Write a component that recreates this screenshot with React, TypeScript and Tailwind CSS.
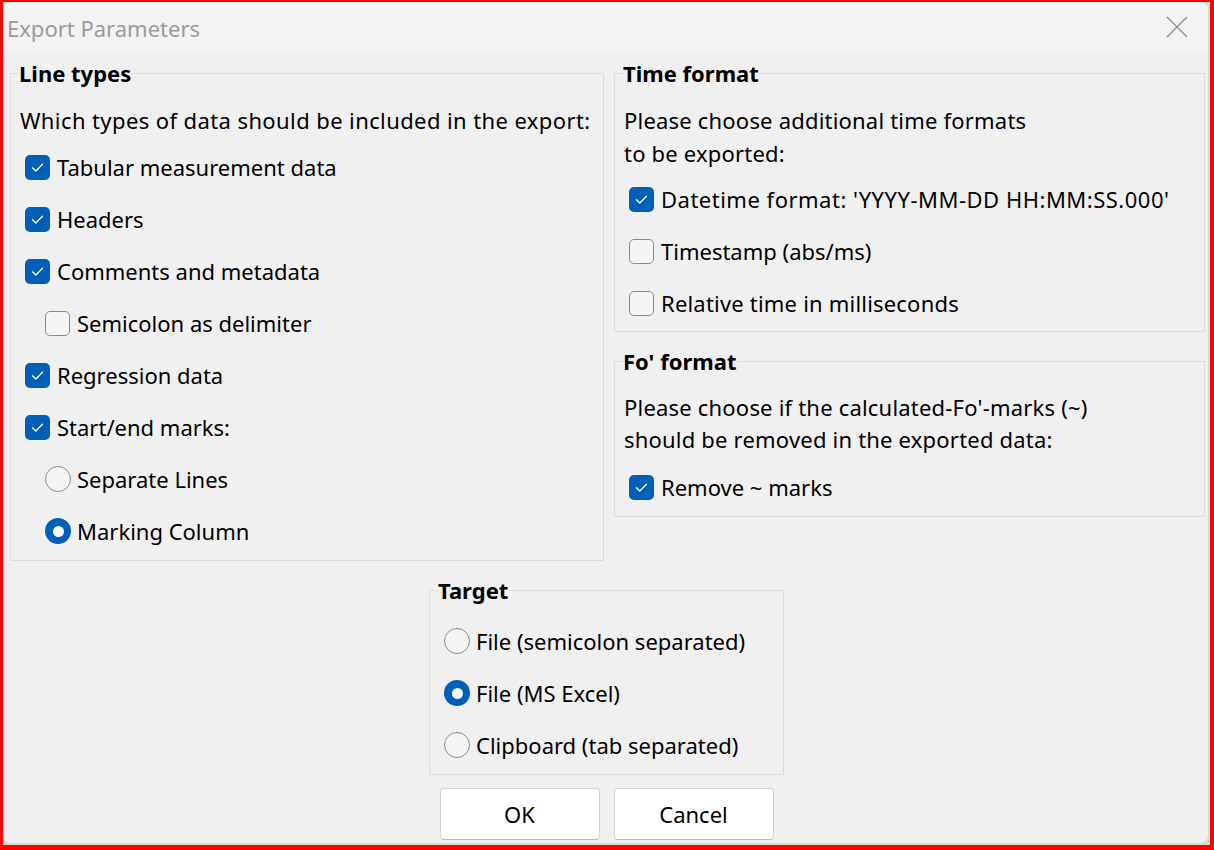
import type { ReactNode } from 'react';

const font = { fontFamily: '"Noto Sans", "Segoe UI", sans-serif' };

function CheckBox({ checked }: { checked: boolean }) {
  if (checked) {
    return (
      <span className="flex h-[25px] w-[25px] shrink-0 items-center justify-center rounded-[5px] bg-[#005fb8]">
        <svg width="15" height="15" viewBox="0 0 15 15" fill="none">
          <path d="M2.5 7.8 L5.8 11 L12.5 4.2" stroke="#ffffff" strokeWidth="1.3" strokeLinecap="round" strokeLinejoin="round" />
        </svg>
      </span>
    );
  }
  return <span className="h-[25px] w-[25px] shrink-0 rounded-[5px] border-[1.5px] border-[#8a8a8a] bg-[#f5f5f5]" />;
}

function Radio({ checked }: { checked: boolean }) {
  if (checked) {
    return (
      <span className="flex h-[26px] w-[26px] shrink-0 items-center justify-center rounded-full bg-[#005fb8]">
        <span className="h-[11px] w-[11px] rounded-full bg-white" />
      </span>
    );
  }
  return <span className="h-[26px] w-[26px] shrink-0 rounded-full border-[1.5px] border-[#8a8a8a] bg-[#f5f5f5]" />;
}

function Row({ children, indent = false, gap = 'gap-[7px]' }: { children: ReactNode; indent?: boolean; gap?: string }) {
  return <div className={`flex h-[52px] items-center ${gap} ${indent ? 'pl-[20px]' : ''}`}>{children}</div>;
}

function Group({ title, className, children }: { title: string; className: string; children: ReactNode }) {
  return (
    <fieldset className={`border border-[#dcdcdc] p-0 ${className}`}>
      <legend className="ml-[8px] px-0 text-[22px] font-bold leading-[24px] text-black">{title}</legend>
      {children}
    </fieldset>
  );
}

export default function App() {
  return (
    <div className="h-[850px] w-[1214px] border-b-[5px] border-l-[3px] border-r-[4px] border-t-[2px] border-[#ff0000] bg-[#d9d9cc]" style={font}>
      <div className="mb-[2px] mr-[2px] flex h-[841px] flex-col overflow-hidden rounded-[8px] bg-[#f0f0f0] text-[22px] text-black">
        <div className="flex h-[48px] shrink-0 items-center justify-between bg-[#f3f3f3] pl-[4px] pr-[20px]">
          <span className="pt-[4px] text-[#9b9b9b]">Export Parameters</span>
          <svg width="22" height="22" viewBox="0 0 22 22" className="mt-[2px]">
            <path d="M1 1 L21 21 M21 1 L1 21" stroke="#8c8c8c" strokeWidth="1.4" />
          </svg>
        </div>

        <div className="flex flex-col pl-[7px] pt-[11px]">
          <div className="flex items-start gap-[10px]">
            <Group title="Line types" className="w-[594px]">
              <div className="flex flex-col pb-[3px] pl-[9px]">
                <div className="mt-[19px] leading-[32px] tracking-[0.4px]">Which types of data should be included in the export:</div>
                <div className="mt-[5px] flex flex-col pl-[5px]">
                  <Row><CheckBox checked /><span>Tabular measurement data</span></Row>
                  <Row><CheckBox checked /><span>Headers</span></Row>
                  <Row><CheckBox checked /><span>Comments and metadata</span></Row>
                  <Row indent><CheckBox checked={false} /><span>Semicolon as delimiter</span></Row>
                  <Row><CheckBox checked /><span>Regression data</span></Row>
                  <Row><CheckBox checked /><span>Start/end marks:</span></Row>
                  <Row indent gap="gap-[6px]"><Radio checked={false} /><span>Separate Lines</span></Row>
                  <Row indent gap="gap-[6px]"><Radio checked /><span>Marking Column</span></Row>
                </div>
              </div>
            </Group>

            <div className="flex flex-col gap-[17px]">
              <Group title="Time format" className="w-[591px]">
                <div className="flex flex-col pb-[2px] pl-[9px]">
                  <div className="mt-[19px] leading-[33px] tracking-[0.2px]">
                    Please choose additional time formats
                    <br />
                    to be exported:
                  </div>
                  <div className="mt-[3px] flex flex-col pl-[5px]">
                    <Row><CheckBox checked /><span className="tracking-[0.5px]">Datetime format: 'YYYY-MM-DD HH:MM:SS.000'</span></Row>
                    <Row><CheckBox checked={false} /><span>Timestamp (abs/ms)</span></Row>
                    <Row><CheckBox checked={false} /><span className="tracking-[0.2px]">Relative time in milliseconds</span></Row>
                  </div>
                </div>
              </Group>

              <Group title="Fo' format" className="w-[591px]">
                <div className="flex flex-col pb-[3px] pl-[9px]">
                  <div className="mt-[18px] leading-[32px] tracking-[0.2px]">
                    Please choose if the calculated-Fo'-marks (~)
                    <br />
                    should be removed in the exported data:
                  </div>
                  <div className="mt-[6px] flex flex-col pl-[5px]">
                    <Row><CheckBox checked /><span>Remove ~ marks</span></Row>
                  </div>
                </div>
              </Group>
            </div>
          </div>

          <div className="mt-[17px] flex flex-col items-center pr-[5px]">
            <Group title="Target" className="w-[355px]">
              <div className="mt-[13px] flex flex-col pb-[3px] pl-[14px]">
                <Row gap="gap-[6px]"><Radio checked={false} /><span>File (semicolon separated)</span></Row>
                <Row gap="gap-[6px]"><Radio checked /><span>File (MS Excel)</span></Row>
                <Row gap="gap-[6px]"><Radio checked={false} /><span>Clipboard (tab separated)</span></Row>
              </div>
            </Group>

            <div className="mt-[13px] flex gap-[14px]">
              <button className="h-[52px] w-[160px] rounded-[4px] border border-[#d4d4d4] border-b-[#b8b8b8] bg-white text-[22px] text-black">OK</button>
              <button className="h-[52px] w-[160px] rounded-[4px] border border-[#d4d4d4] border-b-[#b8b8b8] bg-white text-[22px] text-black">Cancel</button>
            </div>
          </div>
        </div>
      </div>
    </div>
  );
}
